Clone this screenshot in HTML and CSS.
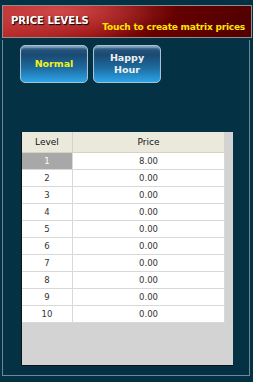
FILE: index.html
```html
<!DOCTYPE html>
<html lang="en">
<head>
    <meta charset="UTF-8">
    <title>Price Levels</title>
    <link rel="stylesheet" href="styles.css">
</head>
<body>

    <!-- Title bar -->
    <div class="header">
        <span class="title">PRICE LEVELS</span>
        <span class="hint">Touch to create matrix prices</span>
    </div>

    <div class="frame">
        <!-- Level type buttons -->
        <div class="buttons">
            <button class="btn active">Normal</button>
            <button class="btn">Happy<br>Hour</button>
        </div>

        <!-- Price grid -->
        <div class="grid-box">
            <table>
                <thead>
                    <tr><th class="col-level">Level</th><th>Price</th></tr>
                </thead>
                <tbody>
                    <tr><td class="selected">1</td><td>8.00</td></tr>
                    <tr><td>2</td><td>0.00</td></tr>
                    <tr><td>3</td><td>0.00</td></tr>
                    <tr><td>4</td><td>0.00</td></tr>
                    <tr><td>5</td><td>0.00</td></tr>
                    <tr><td>6</td><td>0.00</td></tr>
                    <tr><td>7</td><td>0.00</td></tr>
                    <tr><td>8</td><td>0.00</td></tr>
                    <tr><td>9</td><td>0.00</td></tr>
                    <tr><td>10</td><td>0.00</td></tr>
                </tbody>
            </table>
        </div>
    </div>

</body>
</html>
```

FILE: styles.css
```css
body {
    margin: 0;
    width: 253px;
    height: 382px;
    background: #043244;
    font-family: "DejaVu Sans", Verdana, sans-serif;
    overflow: hidden;
}
.header {
    margin: 5px 1px 0 2px;
    height: 33px;
    border: 1px solid #8f8f8f;
    background: radial-gradient(ellipse 120px 30px at 55px 5px, #d04848 0%, rgba(200, 60, 60, 0) 100%),
                linear-gradient(to right, #b82a2a 0%, #9a1010 35%, #6a0000 60%, #520000 100%);
    display: flex;
    align-items: center;
    justify-content: space-between;
    padding: 0 6px 0 8px;
    box-sizing: border-box;
}
.title {
    color: #fff;
    font-weight: bold;
    font-size: 10px;
    text-shadow: 1px 1px 1px #000;
    margin-top: -2px;
}
.hint {
    color: #ffe600;
    font-weight: bold;
    font-size: 9px;
    margin-top: 10px;
    letter-spacing: -0.2px;
}
.frame {
    margin: 2px 3px 0 2px;
    height: 336px;
    border: 1px solid #6c8a96;
    border-top: none;
    box-sizing: border-box;
    padding: 5px 0 0 17px;
}
.buttons {
    display: flex;
    gap: 5px;
}
.btn {
    width: 68px;
    height: 38px;
    border: 1px solid #a8c4d4;
    border-radius: 5px;
    background: linear-gradient(to bottom, #5a86a8 0%, #24527a 12%, #1a4a72 25%, #1d6a9e 60%, #2ca4e6 100%);
    color: #f0f0f0;
    font-family: "DejaVu Sans", Verdana, sans-serif;
    font-weight: bold;
    font-size: 9.5px;
    line-height: 12px;
    padding: 0;
    box-shadow: inset 0 2px 1px rgba(255, 255, 255, 0.25);
}
.btn.active {
    color: #f2f21a;
}
.grid-box {
    margin: 49px 0 0 1px;
    width: 212px;
    height: 234px;
    background: #d3d3d3;
    border-left: 1px solid #111;
    border-bottom: 1px solid #111;
    box-sizing: border-box;
}
table {
    border-collapse: collapse;
    width: 203px;
    font-size: 8.5px;
    color: #333;
    text-align: center;
}
th {
    height: 20px;
    background: #ebe9dc;
    font-weight: normal;
    font-size: 9px;
    color: #111;
    border-right: 1px solid #d6d3c2;
    border-bottom: 1px solid #d6d3c2;
    padding: 0;
}
.col-level {
    width: 50px;
}
td {
    height: 16px;
    background: #fff;
    border-right: 1px solid #d8d8d8;
    border-bottom: 1px solid #d8d8d8;
    padding: 0;
}
td.selected {
    background: #a8a8a8;
    color: #fff;
}
```
